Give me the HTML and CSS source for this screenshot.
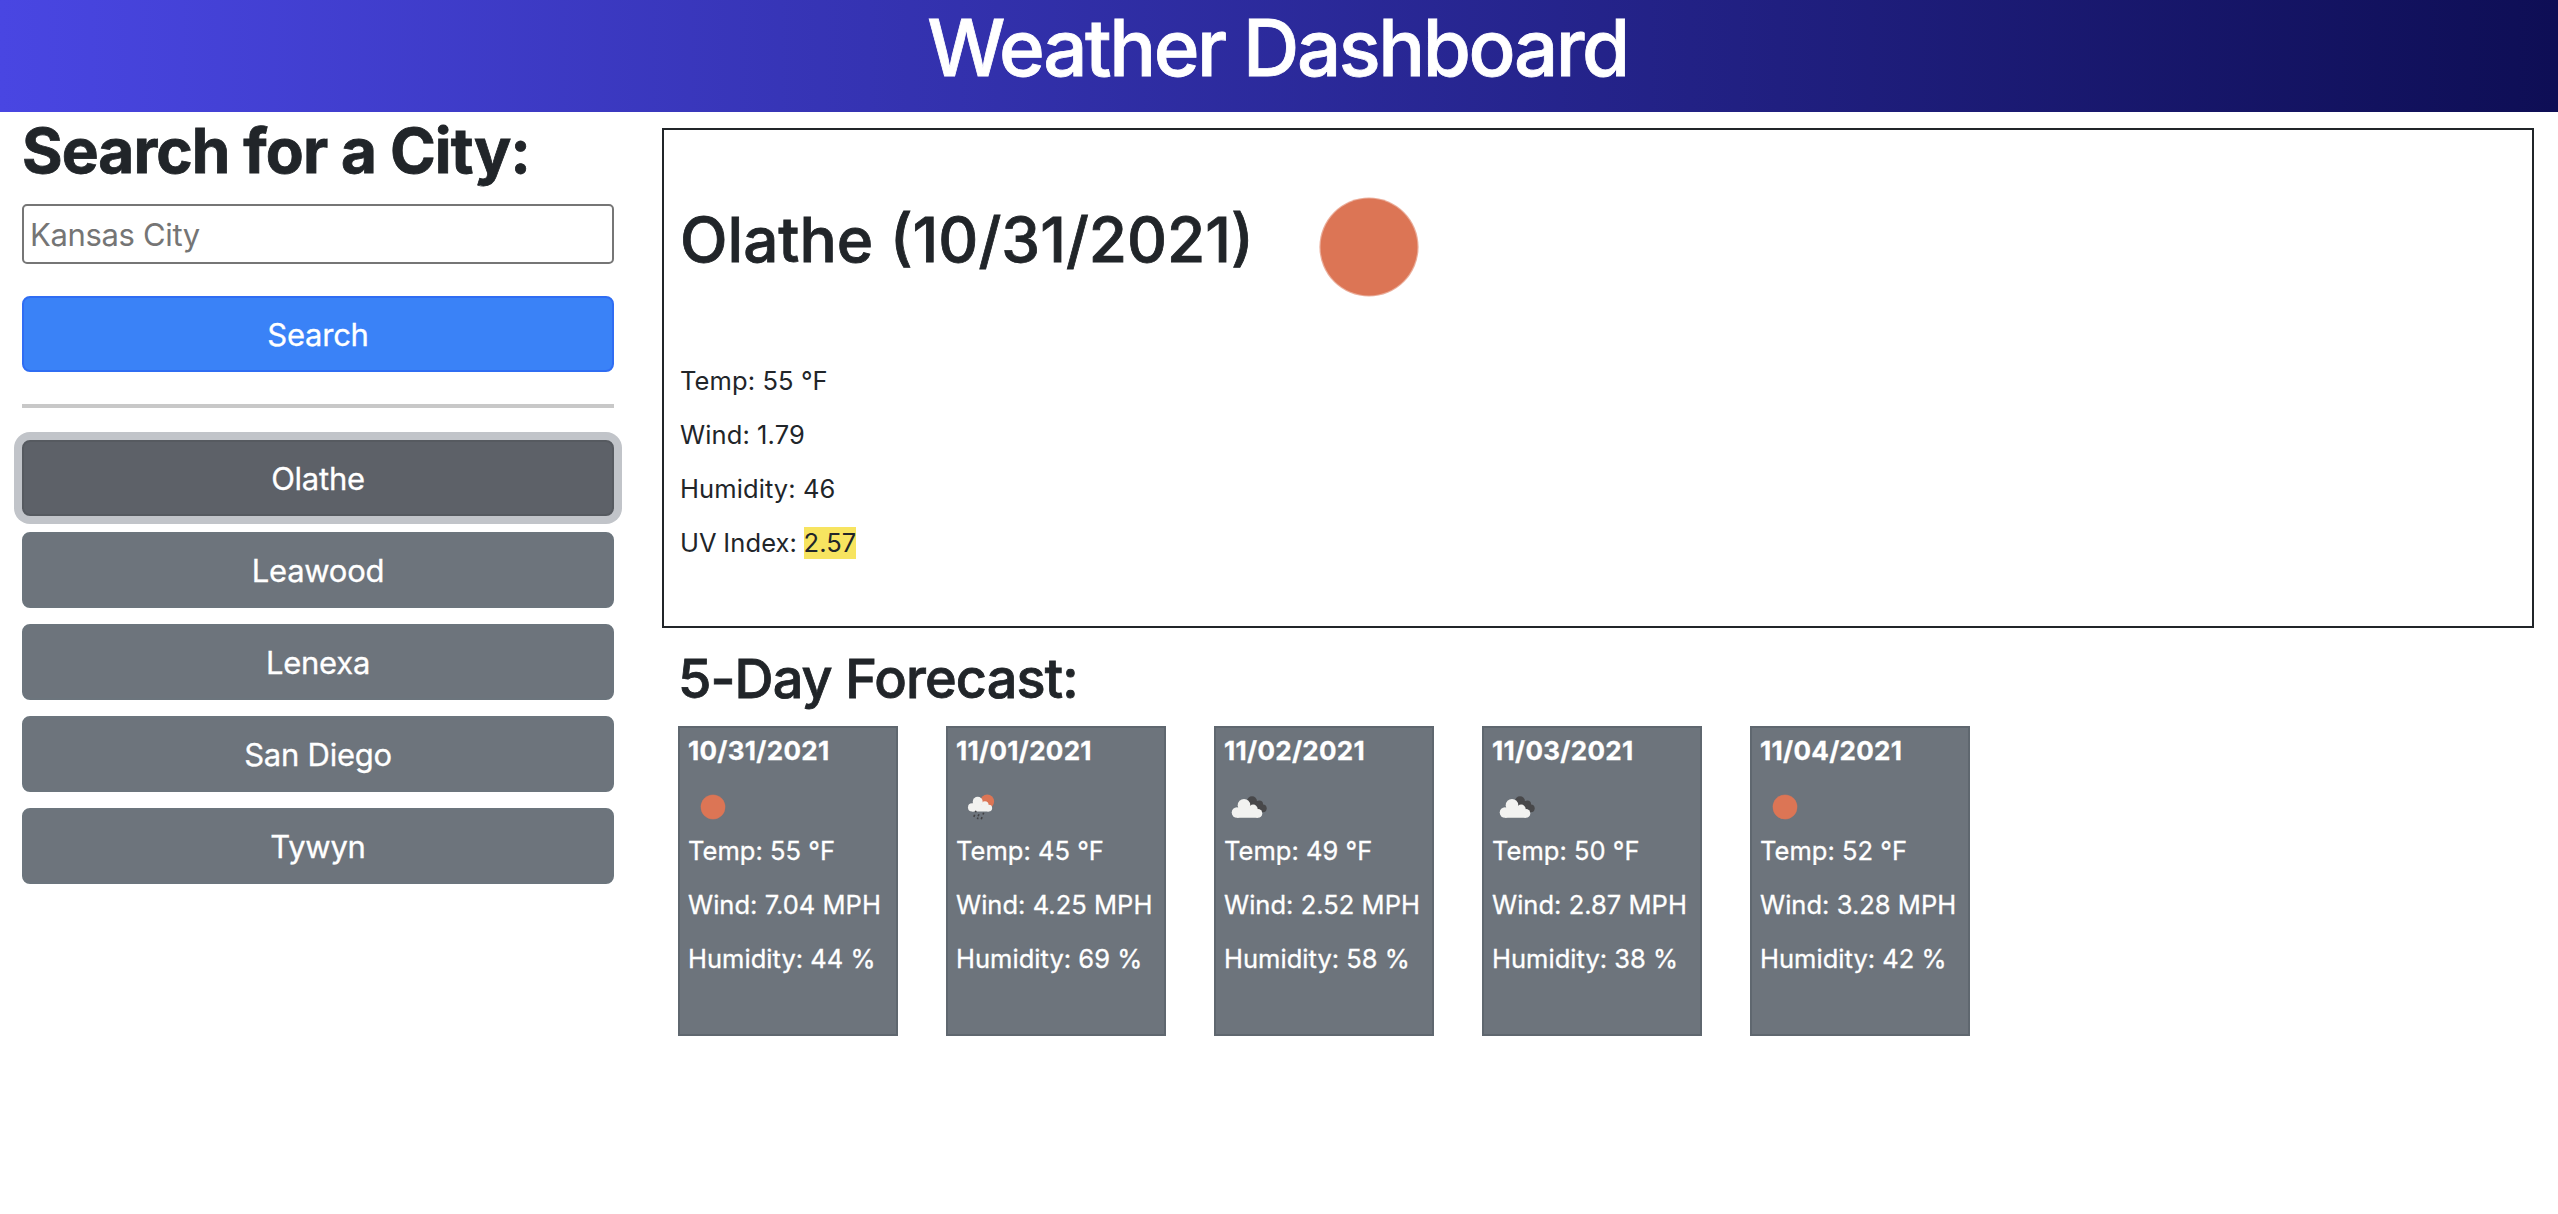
FILE: index.html
```
<!DOCTYPE html>
<html lang="en">
<head>
  <meta charset="utf-8">
  <title>Weather Dashboard</title>
  <link rel="stylesheet" href="styles.css">
</head>
<body>
  <svg class="sprite" aria-hidden="true">
    <symbol id="cloud" viewBox="0 0 50 50">
      <circle cx="20" cy="23.3" r="6.3"/>
      <circle cx="29.2" cy="27.1" r="4.5"/>
      <circle cx="12.9" cy="30.5" r="5.2"/>
      <circle cx="34" cy="31.4" r="4.3"/>
      <path d="M13 26h10l6 3 5 1v5.7H13z"/>
    </symbol>
    <symbol id="sun" viewBox="0 0 50 50">
      <circle cx="25" cy="25" r="12.4" fill="#dc7555" opacity=".6"/>
      <circle cx="25" cy="25" r="12.1" fill="#dc7555"/>
    </symbol>
    <symbol id="clouds" viewBox="0 0 50 50">
      <g fill="#48484a">
        <circle cx="28" cy="19.3" r="5"/>
        <circle cx="35.3" cy="22.3" r="3.8"/>
        <circle cx="38.8" cy="26.3" r="3.9"/>
        <path d="M25 20l8-1 5 5v6H30z"/>
      </g>
      <use href="#cloud" width="50" height="50" fill="#f2f2f0"/>
    </symbol>
    <symbol id="rain" viewBox="0 0 50 50">
      <circle cx="31.2" cy="19.5" r="6.9" fill="#dc7555"/>
      <use href="#cloud" x="5.9" y="1.3" width="39.5" height="39.5" fill="#f2f2f0"/>
      <path d="M20 28.7l-.6 1.6M27.7 30.8l-.7 1.7M18.7 32.8l-.9 2.1M23 32.2l-.9 2.1M22 35.5l-.6 1.6M26.1 35.1l-.9 2.1" stroke="#414144" stroke-width="1.6" fill="none"/>
    </symbol>
  </svg>

  <header class="header"><h1>Weather Dashboard</h1></header>

  <div class="layout">
    <aside class="sidebar">
      <h2 class="search-title">Search for a City:</h2>
      <input class="search-input" type="text" placeholder="Kansas City">
      <button class="btn btn-primary">Search</button>
      <hr class="divider">
      <div class="history">
        <button class="btn active">Olathe</button>
        <button class="btn">Leawood</button>
        <button class="btn">Lenexa</button>
        <button class="btn">San Diego</button>
        <button class="btn">Tywyn</button>
      </div>
    </aside>

    <main class="content">
      <section class="current">
        <div class="current-head">
          <h2>Olathe (10/31/2021)</h2>
          <svg class="current-icon"><use href="#sun"/></svg>
        </div>
        <p>Temp: 55 °F</p>
        <p>Wind: 1.79</p>
        <p>Humidity: 46</p>
        <p class="uv-row">UV Index: <span class="uv">2.57</span></p>
      </section>

      <h3 class="forecast-title">5-Day Forecast:</h3>
      <section class="forecast">
        <article class="card">
          <h4>10/31/2021</h4>
          <svg class="icon"><use href="#sun"/></svg>
          <p>Temp: 55 °F</p>
          <p>Wind: 7.04 MPH</p>
          <p>Humidity: 44 %</p>
        </article>
        <article class="card">
          <h4>11/01/2021</h4>
          <svg class="icon"><use href="#rain"/></svg>
          <p>Temp: 45 °F</p>
          <p>Wind: 4.25 MPH</p>
          <p>Humidity: 69 %</p>
        </article>
        <article class="card">
          <h4>11/02/2021</h4>
          <svg class="icon"><use href="#clouds"/></svg>
          <p>Temp: 49 °F</p>
          <p>Wind: 2.52 MPH</p>
          <p>Humidity: 58 %</p>
        </article>
        <article class="card">
          <h4>11/03/2021</h4>
          <svg class="icon"><use href="#clouds"/></svg>
          <p>Temp: 50 °F</p>
          <p>Wind: 2.87 MPH</p>
          <p>Humidity: 38 %</p>
        </article>
        <article class="card">
          <h4>11/04/2021</h4>
          <svg class="icon"><use href="#sun"/></svg>
          <p>Temp: 52 °F</p>
          <p>Wind: 3.28 MPH</p>
          <p>Humidity: 42 %</p>
        </article>
      </section>
    </main>
  </div>
</body>
</html>
```
FILE: styles.css
```
* {
  box-sizing: border-box;
}

body {
  margin: 0;
  background: #fff;
  color: #212529;
  font: 400 25.5px/38px Inter, "Liberation Sans", sans-serif;
  letter-spacing: 0.1px;
}

h1, h2, h3, h4, p {
  margin: 0;
}

h1, h2, h3 {
  -webkit-text-stroke: 0.8px currentColor;
}

.sprite {
  display: none;
}

.header {
  height: 112px;
  padding-right: 3px;
  background: linear-gradient(to right, #4946e2, #0e0e55);
  color: #fff;
  text-align: center;
}

.header h1 {
  font-size: 78px;
  font-weight: 500;
  line-height: 96px;
  letter-spacing: -2.45px;
}

.layout {
  display: flex;
  gap: 48px;
  padding: 0 24px 0 22px;
}

.sidebar {
  display: flex;
  flex-direction: column;
  width: 592px;
  flex: none;
}

.search-title {
  margin-bottom: 14px;
  font-size: 62px;
  font-weight: 700;
  line-height: 78px;
  letter-spacing: -0.9px;
}

.search-input {
  height: 60px;
  margin-bottom: 32px;
  padding: 1px 6px 0;
  border: 2px solid #767676;
  border-radius: 5px;
  background: #fff;
  font: 400 31px/1.2 Inter, "Liberation Sans", sans-serif;
  letter-spacing: -0.35px;
}

.search-input::placeholder {
  color: #757575;
}

.btn {
  display: block;
  width: 100%;
  height: 76px;
  padding: 1px 0 0;
  border: 2px solid #6c757d;
  border-radius: 8px;
  background: #6d747c;
  color: #fff;
  font: 400 31px/1.2 Inter, "Liberation Sans", sans-serif;
  letter-spacing: -0.25px;
  -webkit-text-stroke: 0.3px currentColor;
}

.btn-primary {
  border-color: #2f6df3;
  background: #3a82f7;
}

.btn.active {
  border-color: #565a60;
  background: #5d6168;
  box-shadow: 0 0 0 8px #c1c4c9;
}

.divider {
  width: 100%;
  height: 4px;
  margin: 32px 0;
  border: 0;
  background: #c8c8c8;
}

.history {
  display: flex;
  flex-direction: column;
  gap: 16px;
}

.content {
  flex: 1;
}

.current {
  height: 500px;
  margin-top: 16px;
  padding: 17px 16px;
  border: 2px solid #212529;
}

.current-head {
  display: flex;
  align-items: center;
  margin-bottom: 15px;
}

.current-head h2 {
  width: 589px;
  padding-bottom: 15px;
  font-size: 62px;
  font-weight: 500;
  line-height: 76px;
  letter-spacing: 0;
  white-space: nowrap;
}

.current-icon {
  width: 200px;
  height: 200px;
}

.current p,
.card p {
  margin-bottom: 16px;
}

.uv-row {
  word-spacing: -0.7px;
}

.uv {
  display: inline-block;
  height: 32px;
  line-height: 32px;
  letter-spacing: 0;
  background: #f7e460;
}

.forecast-title {
  margin: 17px 0 14px 16px;
  font-size: 54px;
  font-weight: 500;
  line-height: 67px;
  letter-spacing: -0.88px;
}

.forecast {
  display: flex;
  gap: 48px;
  margin-left: 16px;
}

.card {
  width: 220px;
  height: 310px;
  padding: 4px 0 0 8px;
  border: 2px solid #5f676f;
  background: #6d747c;
  color: #fff;
  letter-spacing: 0.03px;
  white-space: nowrap;
  -webkit-text-stroke: 0.3px currentColor;
}

.card h4 {
  margin-bottom: 12px;
  font-size: 26px;
  font-weight: 700;
  letter-spacing: 0.3px;
}

.icon {
  display: block;
  width: 50px;
  height: 50px;
}
```
